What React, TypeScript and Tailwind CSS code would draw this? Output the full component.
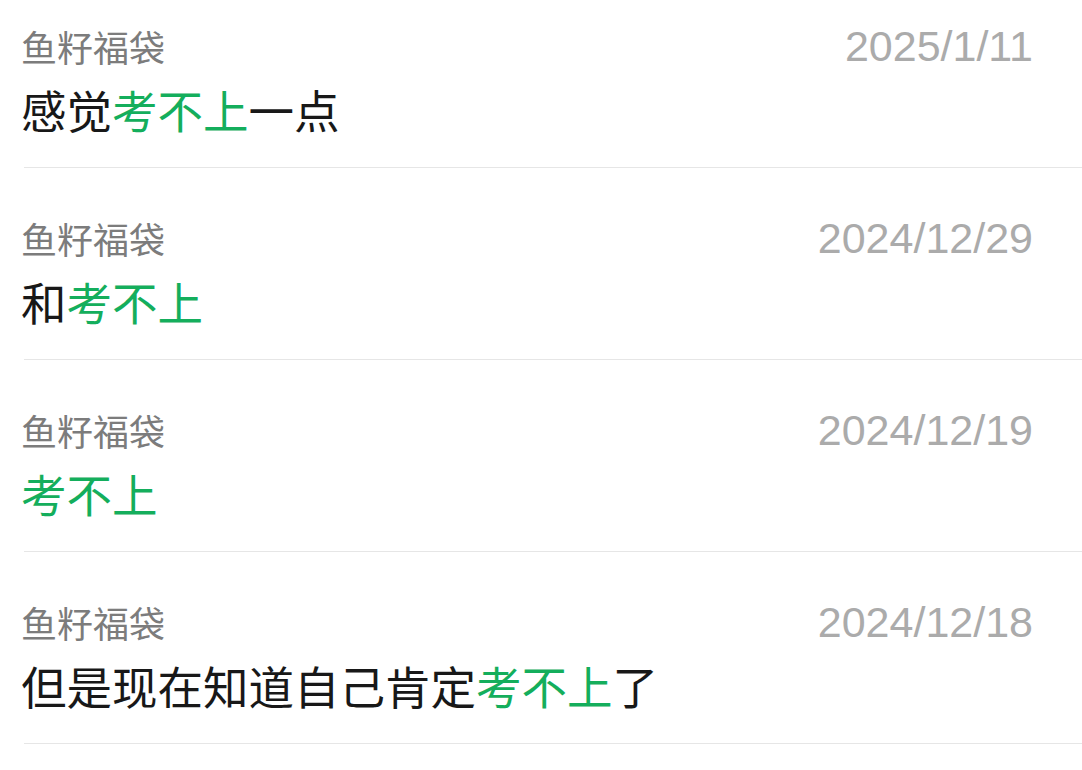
const results = [
  { name: '鱼籽福袋', date: '2025/1/11', parts: ['感觉', '考不上', '一点'] },
  { name: '鱼籽福袋', date: '2024/12/29', parts: ['和', '考不上', ''] },
  { name: '鱼籽福袋', date: '2024/12/19', parts: ['', '考不上', ''] },
  { name: '鱼籽福袋', date: '2024/12/18', parts: ['但是现在知道自己肯定', '考不上', '了'] },
];

const cjk = { fontFamily: '"Noto Sans CJK SC", "Noto Sans", sans-serif' };
const latin = { fontFamily: '"Liberation Sans", Arial, sans-serif' };

export default function App() {
  return (
    <div className="h-[770px] w-[1082px] overflow-hidden bg-white" style={cjk}>
      {results.map((r, i) => (
        <ResultRow key={r.date} first={i === 0} {...r} />
      ))}
    </div>
  );
}

function ResultRow({
  name,
  date,
  parts,
  first,
}: {
  name: string;
  date: string;
  parts: string[];
  first: boolean;
}) {
  return (
    <div>
      <div className={`pl-[21px] pr-[49px] pb-[30px] ${first ? 'pt-[24px]' : 'pt-[48px]'}`}>
        <div className="flex h-[44px] items-center justify-between">
          <span className="text-[36px] leading-[44px] text-[#7c7c7c]">{name}</span>
          <span className="text-[43px] leading-[44px] text-[#ababab]" style={latin}>
            {date}
          </span>
        </div>
        <p className="mt-[13px] h-[56px] text-[45.5px] leading-[56px] text-[#181818]">
          {parts[0]}
          <span className="text-[#14ae5c]">{parts[1]}</span>
          {parts[2]}
        </p>
      </div>
      <div className="ml-[24px] h-px bg-[#e6e6e6]" />
    </div>
  );
}
